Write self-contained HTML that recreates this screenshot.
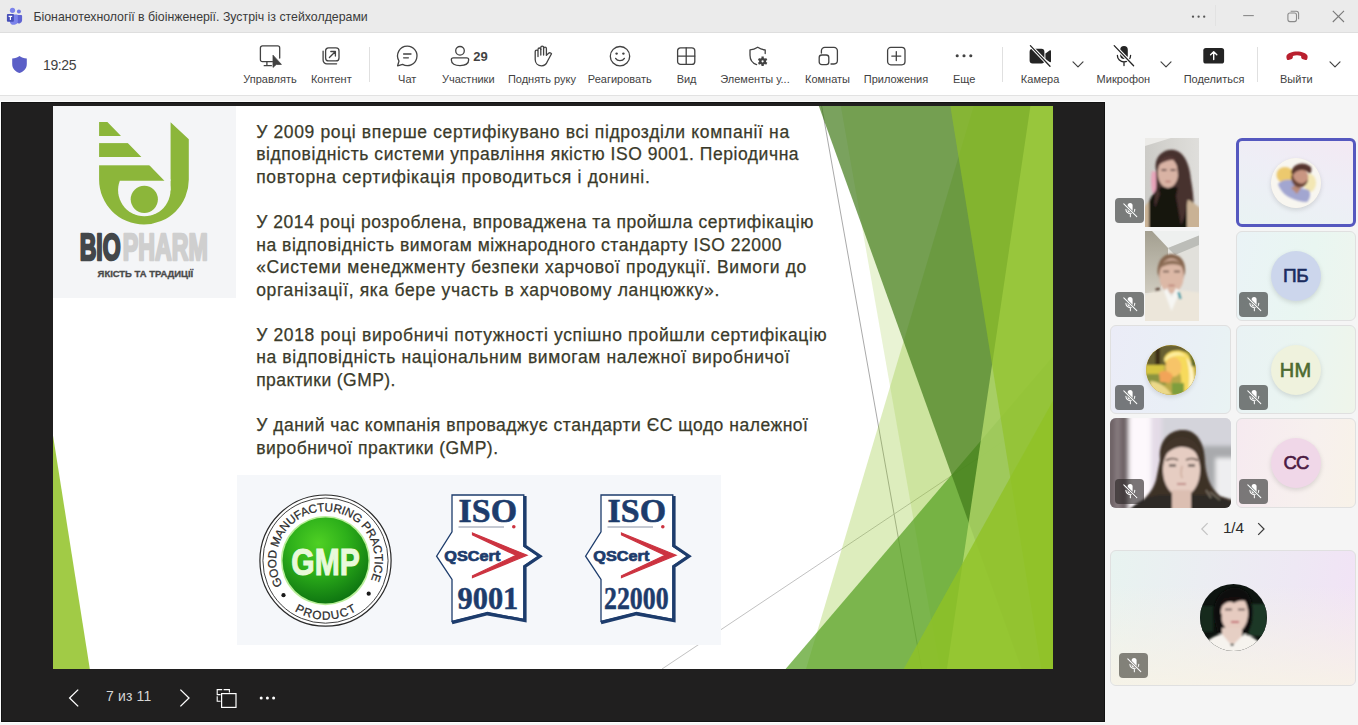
<!DOCTYPE html>
<html lang="uk">
<head>
<meta charset="utf-8">
<title>Teams</title>
<style>
*{box-sizing:border-box;margin:0;padding:0}
html,body{width:1358px;height:725px;overflow:hidden;background:#f5f5f5;font-family:"Liberation Sans",sans-serif;color:#242424}
.abs{position:absolute}
#titlebar{position:absolute;left:0;top:0;width:1358px;height:33px;background:#ebebeb;border-bottom:1px solid #dedede;z-index:2}
#titlebar .ttl{position:absolute;left:33.4px;top:10px;font-size:12.33px;line-height:14px;color:#3a3a3a;white-space:nowrap}
#toolbar{position:absolute;left:0;top:32px;width:1358px;height:64px;background:#fff;border-bottom:1px solid #e2e2e2}
.lbl{position:absolute;top:40px;font-size:11px;line-height:14px;color:#424242;white-space:nowrap;transform:translateX(-50%)}
.vdiv{position:absolute;top:15px;width:1px;height:35px;background:#e0e0e0}
#stage{position:absolute;left:1px;top:102px;width:1104px;height:620px;background:#201f1f;box-shadow:0 0 0 1px #fcfcfc,inset 0 0 0 1px #121212}
#slide{position:absolute;left:52px;top:4px;width:1000px;height:563px;background:#fff;overflow:hidden}
.tl{position:absolute;left:203.2px;font-size:17.5px;line-height:22px;height:22px;color:#3a3a2a;-webkit-text-stroke:0.25px #3a3a2a;white-space:pre}
#panel{position:absolute;left:1105px;top:97px;width:253px;height:628px;background:#f5f5f5}
.tile{position:absolute;width:120px;height:89px;border:1px solid #e0e0e0;border-radius:6px;overflow:hidden}
.badge{position:absolute;width:29px;height:25px;border-radius:4px;background:#858585}
.av{position:absolute;width:50px;height:50px;border-radius:50%;text-align:center;line-height:50px;font-size:19px;font-weight:normal;-webkit-text-stroke:0.6px currentColor;box-shadow:0 2px 5px rgba(0,0,0,.13)}
</style>
</head>
<body>
<div id="titlebar">
  <svg class="abs" style="left:5px;top:7px" width="18" height="18" viewBox="0 0 18 18">
    <circle cx="13.9" cy="4.5" r="2" fill="#7077e0"/>
    <path d="M11.6 8.1 H16.2 A0.9 0.9 0 0 1 17.1 9 V13.2 A3.1 3.1 0 0 1 11.6 15.2 Z" fill="#5f63d2"/>
    <circle cx="7.5" cy="3.3" r="2.6" fill="#7b83eb"/>
    <path d="M4.6 7.5 H11.9 A0.9 0.9 0 0 1 12.8 8.4 V13 A4 4 0 0 1 4.8 14.4 Z" fill="#7b83eb"/>
    <rect x="1.9" y="7" width="7" height="7.7" rx="0.9" fill="#464eb8"/>
    <path d="M3.6 9.3 H7.2 M5.4 9.3 V13" stroke="#fff" stroke-width="1.15" fill="none"/>
  </svg>
  <div class="ttl">Біонанотехнології в біоінженерії. Зустріч із стейхолдерами</div>
  <svg class="abs" style="left:1190px;top:13px" width="18" height="8" viewBox="0 0 18 8"><circle cx="3" cy="3.7" r="1.15" fill="#555"/><circle cx="8.6" cy="3.7" r="1.15" fill="#555"/><circle cx="14.2" cy="3.7" r="1.15" fill="#555"/></svg>
  <div class="abs" style="left:1215px;top:5px;width:1px;height:21px;background:#e2e2e2"></div>
  <svg class="abs" style="left:1242px;top:10px" width="14" height="12" viewBox="0 0 14 12"><path d="M1.2 5.6 H11.8" stroke="#8a8a8a" stroke-width="1.1"/></svg>
  <svg class="abs" style="left:1286px;top:9px" width="15" height="15" viewBox="0 0 15 15"><rect x="1.9" y="4" width="8.6" height="8.6" rx="2" fill="none" stroke="#8a8a8a" stroke-width="1.1"/><path d="M4.6 2.2 H10.2 A2.4 2.4 0 0 1 12.6 4.6 V10.2" fill="none" stroke="#8a8a8a" stroke-width="1.1"/></svg>
  <svg class="abs" style="left:1331px;top:9px" width="15" height="15" viewBox="0 0 15 15"><path d="M1.8 1.9 L13 13 M13 1.9 L1.8 13" stroke="#7a7a7a" stroke-width="1.1"/></svg>
</div>
<div id="toolbar">
<svg style="left:11px;top:23px" class="abs" width="17" height="19" viewBox="0 0 17 19"><path d="M8.5 1 C10.5 2.6 13 3.4 15.8 3.6 V9 C15.8 13.6 12.6 16.6 8.5 18 C4.4 16.6 1.2 13.6 1.2 9 V3.6 C4 3.4 6.5 2.6 8.5 1 Z" fill="#5b5fc7"/></svg>
<div class="abs" style="left:43px;top:24.5px;font-size:14px;line-height:16px;color:#424242;letter-spacing:-0.4px">19:25</div>
<svg style="left:258px;top:12px" class="abs" width="26" height="25" viewBox="0 0 26 25"><path d="M14.4 17.7 H4.4 A2 2 0 0 1 2.4 15.7 V3.9 A2 2 0 0 1 4.4 1.9 H19.7 A2 2 0 0 1 21.7 3.9 V14" fill="none" stroke="#424242" stroke-width="1.3" stroke-linecap="round" stroke-linejoin="round"/><path d="M6.2 21.7 H13.4 M8.9 17.9 V21.5" fill="none" stroke="#424242" stroke-width="1.3" stroke-linecap="round" stroke-linejoin="round"/><path d="M15 11.2 V23.4 L18.3 20.4 H23.4 Z" fill="#424242" stroke="#424242" stroke-width="0.8" stroke-linejoin="round"/></svg>
<div class="lbl" style="left:270px">Управлять</div>
<svg style="left:320px;top:13px" class="abs" width="22" height="22" viewBox="0 0 22 22"><rect x="5.6" y="2.9" width="13.4" height="13" rx="3" fill="none" stroke="#424242" stroke-width="1.3" stroke-linecap="round" stroke-linejoin="round"/><path d="M3.1 6.2 V15 A3.8 3.8 0 0 0 6.9 18.8 H16.6" fill="none" stroke="#424242" stroke-width="1.3" stroke-linecap="round" stroke-linejoin="round"/><path d="M9.4 12.5 L15.2 6.7 M10.8 6.5 H15.4 V11" fill="none" stroke="#424242" stroke-width="1.3" stroke-linecap="round" stroke-linejoin="round"/></svg>
<div class="lbl" style="left:331.3px">Контент</div>
<div class="vdiv" style="left:369px"></div>
<svg style="left:395px;top:12px" class="abs" width="24" height="24" viewBox="0 0 24 24"><path d="M12.3 2.2 A9.7 9.7 0 1 1 7.6 20.4 L2.6 21.8 L4 17 A9.7 9.7 0 0 1 12.3 2.2 Z" fill="none" stroke="#424242" stroke-width="1.3" stroke-linecap="round" stroke-linejoin="round"/><path d="M8.6 10 H16 M8.6 13.8 H13.4" fill="none" stroke="#424242" stroke-width="1.3" stroke-linecap="round" stroke-linejoin="round"/></svg>
<div class="lbl" style="left:407.2px">Чат</div>
<svg style="left:449px;top:12px" class="abs" width="22" height="24" viewBox="0 0 22 24"><circle cx="11" cy="6.8" r="4.3" fill="none" stroke="#424242" stroke-width="1.3" stroke-linecap="round" stroke-linejoin="round"/><path d="M4.3 13.8 H17.7 A2 2 0 0 1 19.7 15.8 C19.7 19.8 16 21.6 11 21.6 C6 21.6 2.3 19.8 2.3 15.8 A2 2 0 0 1 4.3 13.8 Z" fill="none" stroke="#424242" stroke-width="1.3" stroke-linecap="round" stroke-linejoin="round"/></svg>
<div class="abs" style="left:473.2px;top:17.6px;font-size:13px;line-height:14px;font-weight:bold;color:#424242">29</div>
<div class="lbl" style="left:468.3px">Участники</div>
<svg style="left:531px;top:12px" class="abs" width="23" height="24" viewBox="0 0 23 24"><path d="M7 12.5 V5.4 A1.4 1.4 0 0 1 9.8 5.4 V3.6 A1.4 1.4 0 0 1 12.6 3.6 V4.6 A1.4 1.4 0 0 1 15.4 4.6 V11.4 L17.6 9.3 C18.6 8.4 20 8.7 20.5 9.8 L16.6 17 C15.6 19.6 13.8 21.8 10.6 21.8 C7 21.8 4.2 19.4 4.2 15.6 V7.6 A1.4 1.4 0 0 1 7 7.6" fill="none" stroke="#424242" stroke-width="1.3" stroke-linecap="round" stroke-linejoin="round"/><path d="M9.8 5.4 V11 M12.6 4.6 V11" fill="none" stroke="#424242" stroke-width="1.3" stroke-linecap="round" stroke-linejoin="round"/></svg>
<div class="lbl" style="left:541.9px">Поднять руку</div>
<svg style="left:608px;top:12px" class="abs" width="24" height="24" viewBox="0 0 24 24"><circle cx="12" cy="12.2" r="9.7" fill="none" stroke="#424242" stroke-width="1.3" stroke-linecap="round" stroke-linejoin="round"/><circle cx="8.6" cy="9.6" r="1.2" fill="#424242"/><circle cx="15.4" cy="9.6" r="1.2" fill="#424242"/><path d="M7.6 14.4 C9.4 17.4 14.6 17.4 16.4 14.4" fill="none" stroke="#424242" stroke-width="1.3" stroke-linecap="round" stroke-linejoin="round"/></svg>
<div class="lbl" style="left:619.8px">Реагировать</div>
<svg style="left:675px;top:13px" class="abs" width="22" height="22" viewBox="0 0 22 22"><rect x="2.6" y="2.8" width="17.2" height="16.6" rx="3" fill="none" stroke="#424242" stroke-width="1.3" stroke-linecap="round" stroke-linejoin="round"/><path d="M11.2 2.8 V19.4 M2.6 11.1 H19.8" fill="none" stroke="#424242" stroke-width="1.3" stroke-linecap="round" stroke-linejoin="round"/></svg>
<div class="lbl" style="left:686.6px">Вид</div>
<svg style="left:747px;top:12px" class="abs" width="24" height="25" viewBox="0 0 24 25"><path d="M18.2 9.6 V5.9 C15.4 5.7 13 4.7 10.7 3.2 C8.4 4.7 6 5.7 3 5.9 V11.2 C3 16 5.8 19.2 9.6 20.6" fill="none" stroke="#424242" stroke-width="1.3" stroke-linecap="round" stroke-linejoin="round"/><g transform="translate(15.6 17.3)"><circle r="3.4" fill="#424242"/><g stroke="#424242" stroke-width="2.3"><path d="M0 -4.8 V4.8 M-4.15 -2.4 L4.15 2.4 M-4.15 2.4 L4.15 -2.4"/></g><circle r="1.1" fill="#fff"/></g></svg>
<div class="lbl" style="left:755px">Элементы у...</div>
<svg style="left:817px;top:13px" class="abs" width="23" height="22" viewBox="0 0 23 22"><path d="M4.4 8 V5.8 A3.4 3.4 0 0 1 7.8 2.4 H17 A3.4 3.4 0 0 1 20.4 5.8 V15.6 A3.4 3.4 0 0 1 17 19 H14" fill="none" stroke="#424242" stroke-width="1.3" stroke-linecap="round" stroke-linejoin="round"/><rect x="2.2" y="10" width="9.6" height="9.6" rx="2.6" fill="none" stroke="#424242" stroke-width="1.3" stroke-linecap="round" stroke-linejoin="round"/></svg>
<div class="lbl" style="left:827.5px">Комнаты</div>
<svg style="left:885px;top:13px" class="abs" width="23" height="22" viewBox="0 0 23 22"><rect x="2.6" y="2.4" width="17.4" height="17.4" rx="3.2" fill="none" stroke="#424242" stroke-width="1.3" stroke-linecap="round" stroke-linejoin="round"/><path d="M11.3 6.6 V15.6 M6.8 11.1 H15.8" fill="none" stroke="#424242" stroke-width="1.3" stroke-linecap="round" stroke-linejoin="round"/></svg>
<div class="lbl" style="left:896px">Приложения</div>
<svg style="left:954px;top:20px" class="abs" width="20" height="8" viewBox="0 0 20 8"><circle cx="3.2" cy="3.8" r="1.55" fill="#424242"/><circle cx="10" cy="3.8" r="1.55" fill="#424242"/><circle cx="16.8" cy="3.8" r="1.55" fill="#424242"/></svg>
<div class="lbl" style="left:964.1px">Еще</div>
<div class="vdiv" style="left:1002px"></div>
<svg style="left:1028px;top:12px" class="abs" width="25" height="24" viewBox="0 0 25 24"><path d="M4.6 4.8 H13.4 A3 3 0 0 1 16.4 7.8 V16.6 A3 3 0 0 1 13.4 19.6 H4.6 A3 3 0 0 1 1.6 16.6 V7.8 A3 3 0 0 1 4.6 4.8 Z" fill="#242424"/><path d="M17.4 9.4 L21.6 6.4 C22.2 6 23 6.4 23 7.2 V17.2 C23 18 22.2 18.4 21.6 18 L17.4 15 Z" fill="#242424"/><path d="M2.4 1.6 L22 22.2" stroke="#fff" stroke-width="3.4"/><path d="M2.4 1.6 L22 22.2" stroke="#242424" stroke-width="1.3" stroke-linecap="round"/></svg>
<div class="lbl" style="left:1040.1px">Камера</div>
<svg style="left:1071.5px;top:28px" class="abs" width="12" height="9" viewBox="0 0 12 9"><path d="M1 1.8 L6 6.8 L11 1.8" fill="none" stroke="#424242" stroke-width="1.2" stroke-linecap="round" stroke-linejoin="round"/></svg>
<svg style="left:1111px;top:11px" class="abs" width="26" height="26" viewBox="0 0 26 26"><rect x="9.2" y="3" width="7.6" height="13" rx="3.8" fill="#242424"/><path d="M6.4 12.4 A6.6 6.6 0 0 0 19.6 12.4 M13 19.2 V22.6" fill="none" stroke="#242424" stroke-width="1.3" stroke-linecap="round"/><path d="M3.2 2.6 L22.6 22.8" stroke="#fff" stroke-width="3.4"/><path d="M3.2 2.6 L22.6 22.8" stroke="#242424" stroke-width="1.3" stroke-linecap="round"/></svg>
<div class="lbl" style="left:1123.4px">Микрофон</div>
<svg style="left:1159.5px;top:28px" class="abs" width="12" height="9" viewBox="0 0 12 9"><path d="M1 1.8 L6 6.8 L11 1.8" fill="none" stroke="#424242" stroke-width="1.2" stroke-linecap="round" stroke-linejoin="round"/></svg>
<svg style="left:1202px;top:14px" class="abs" width="24" height="19" viewBox="0 0 24 19"><rect x="1.3" y="1.9" width="20.8" height="15.7" rx="2.6" fill="#242424"/><path d="M11.7 13.6 V6 M8.6 8.8 L11.7 5.7 L14.8 8.8" fill="none" stroke="#fff" stroke-width="1.4" stroke-linecap="round" stroke-linejoin="round"/></svg>
<div class="lbl" style="left:1214px">Поделиться</div>
<div class="vdiv" style="left:1257px"></div>
<svg style="left:1285px;top:17px" class="abs" width="24" height="13" viewBox="0 0 24 13"><path d="M12 2.4 C7 2.4 2.6 4 1.6 6.6 C1.2 7.8 1.4 9.4 2 10.4 C2.3 10.9 2.9 11.1 3.5 10.9 L6.8 9.9 C7.4 9.7 7.8 9.2 7.8 8.6 L7.9 6.9 C10.4 6.1 13.6 6.1 16.1 6.9 L16.2 8.6 C16.2 9.2 16.6 9.7 17.2 9.9 L20.5 10.9 C21.1 11.1 21.7 10.9 22 10.4 C22.6 9.4 22.8 7.8 22.4 6.6 C21.4 4 17 2.4 12 2.4 Z" fill="#b91f2e"/></svg>
<div class="lbl" style="left:1296.3px">Выйти</div>
<svg style="left:1328.5px;top:28px" class="abs" width="12" height="9" viewBox="0 0 12 9"><path d="M1 1.8 L6 6.8 L11 1.8" fill="none" stroke="#424242" stroke-width="1.2" stroke-linecap="round" stroke-linejoin="round"/></svg>
</div>
<div id="stage">
<div id="slide">
<svg class="abs" style="left:0;top:0" width="1000" height="563" viewBox="0 0 12192 6858" preserveAspectRatio="none">
<line x1="9371" y1="0" x2="10590" y2="6858" stroke="#a8a8a8" stroke-width="12"/>
<line x1="12189" y1="3681" x2="7425" y2="6858" stroke="#c0c0c0" stroke-width="12"/>
<polygon points="11227,-8 12192,-8 12192,6858 9181,6858" fill="#90c226" fill-opacity="0.30"/>
<polygon points="9603,-8 12192,-8 12192,6858 10812,6858" fill="#90c226" fill-opacity="0.20"/>
<polygon points="12192,3048 12192,6858 8932,6858" fill="#54a021" fill-opacity="0.72"/>
<polygon points="9334,-8 12192,-8 12192,6858 11808,6858" fill="#427a1a" fill-opacity="0.70"/>
<polygon points="11918,-8 12192,-8 12192,6858 10899,6858" fill="#c0e474" fill-opacity="0.70"/>
<polygon points="10939,-8 12192,-8 12192,6858 12048,6858" fill="#90c226" fill-opacity="0.65"/>
<polygon points="12192,3590 12192,6858 10372,6858" fill="#90c226" fill-opacity="0.80"/>
<polygon points="0,4013 449,6858 0,6858" fill="#90c226" fill-opacity="0.85"/>
</svg>
<div class="tl" style="top:14.8px;letter-spacing:0.637px">У 2009 році вперше сертифікувано всі підрозділи компанії на</div>
<div class="tl" style="top:37.4px;letter-spacing:0.560px">відповідність системи управління якістю ISO 9001. Періодична</div>
<div class="tl" style="top:59.9px;letter-spacing:0.710px">повторна сертифікація проводиться і донині.</div>
<div class="tl" style="top:105.0px;letter-spacing:0.558px">У 2014 році розроблена, впроваджена та пройшла сертифікацію</div>
<div class="tl" style="top:127.5px;letter-spacing:0.541px">на відповідність вимогам міжнародного стандарту ISO 22000</div>
<div class="tl" style="top:150.1px;letter-spacing:0.658px">«Системи менеджменту безпеки харчової продукції. Вимоги до</div>
<div class="tl" style="top:172.6px;letter-spacing:0.656px">організації, яка бере участь в харчовому ланцюжку».</div>
<div class="tl" style="top:217.8px;letter-spacing:0.645px">У 2018 році виробничі потужності успішно пройшли сертифікацію</div>
<div class="tl" style="top:240.3px;letter-spacing:0.635px">на відповідність національним вимогам належної виробничої</div>
<div class="tl" style="top:262.8px;letter-spacing:0.422px">практики (GMP).</div>
<div class="tl" style="top:307.9px;letter-spacing:0.516px">У даний час компанія впроваджує стандарти ЄС щодо належної</div>
<div class="tl" style="top:330.5px;letter-spacing:0.479px">виробничої практики (GMP).</div>
<div class="abs" style="left:0;top:0;width:182.5px;height:192px;background:#f4f5f7"></div>
<svg class="abs" style="left:0;top:0" width="183" height="192" viewBox="53 106 183 192">
<path d="M99.1,121.9 L107.4,121.9 L164.4,180.7 L170.6,180.7 L170.6,122.3 L188.8,139.3 L188.8,179.7 A44.85,44.85 0 0 1 99.1,179.7 Z" fill="#8cb63a"/>
<path d="M119.85,180.7 A26.2,26.2 0 1 0 168.75,180.7 Z" fill="#f4f5f7"/>
<rect x="164.4" y="179.5" width="6.2" height="11" fill="#f4f5f7"/>
<rect x="98" y="136" width="66" height="7.1" fill="#f4f5f7"/>
<rect x="98" y="157" width="66" height="8.3" fill="#f4f5f7"/>
<circle cx="144.3" cy="199.3" r="13.6" fill="#8cb63a"/>
<text x="79.7" y="259.9" font-family="Liberation Sans, sans-serif" font-weight="bold" font-size="37.6" fill="#43474a" stroke="#43474a" stroke-width="2.6" stroke-linejoin="round" textLength="40.9" lengthAdjust="spacingAndGlyphs">BIO</text>
<text x="122.7" y="259.9" font-family="Liberation Sans, sans-serif" font-weight="bold" font-size="37.6" fill="#cfcfcf" stroke="#cfcfcf" stroke-width="2.6" stroke-linejoin="round" textLength="85.1" lengthAdjust="spacingAndGlyphs">PHARM</text>
<text x="97.6" y="276.8" font-family="Liberation Sans, sans-serif" font-weight="bold" font-size="8.8" fill="#4a4a4a" stroke="#4a4a4a" stroke-width="0.3" textLength="95.6" lengthAdjust="spacingAndGlyphs">ЯКІСТЬ ТА ТРАДИЦІЇ</text>
</svg>
<div class="abs" style="left:183.5px;top:368.7px;width:484.29999999999995px;height:170.59999999999997px;background:#f5f7fa"></div>
<svg class="abs" style="left:183px;top:368px" width="486" height="172" viewBox="236 474 486 172">
<defs>
<radialGradient id="gb" cx="0.42" cy="0.3" r="0.75"><stop offset="0" stop-color="#4fd024"/><stop offset="0.45" stop-color="#2db01a"/><stop offset="1" stop-color="#0b6f10"/></radialGradient>
<path id="arcTop" d="M282.59,584.88 A49.3,49.3 0 1 1 371.05,579.47"/>
<path id="arcBot" d="M294.67,610.91 A59,59 0 0 0 356.33,610.91"/>
</defs>
<circle cx="325.5" cy="560.6" r="65.6" fill="#fff" stroke="#2a2a2a" stroke-width="1.2"/>
<circle cx="325.5" cy="560.6" r="62.6" fill="none" stroke="#2a2a2a" stroke-width="0.9"/>
<circle cx="325.5" cy="560.6" r="44.6" fill="#b9ef9a"/>
<circle cx="325.5" cy="560.6" r="43" fill="url(#gb)"/>
<text font-family="Liberation Sans, sans-serif" font-size="11.8" fill="#2b2b2b" stroke="#2b2b2b" stroke-width="0.25"><textPath href="#arcTop" textLength="199.6" lengthAdjust="spacing">GOOD MANUFACTURING PRACTICE</textPath></text>
<text font-family="Liberation Sans, sans-serif" font-size="11.8" fill="#2b2b2b" stroke="#2b2b2b" stroke-width="0.25"><textPath href="#arcBot" textLength="64.9" lengthAdjust="spacing">PRODUCT</textPath></text>
<circle cx="283.5" cy="595.2" r="2.1" fill="#1a1a1a"/>
<circle cx="368.7" cy="593.7" r="2.1" fill="#1a1a1a"/>
<text x="291.3" y="575" font-family="Liberation Sans, sans-serif" font-weight="bold" font-size="37" fill="#e9f9da" stroke="#e9f9da" stroke-width="1.1" textLength="68.4" lengthAdjust="spacingAndGlyphs">GMP</text>
<g transform="translate(0 0)">
<path d="M452,495 L523.8,495 L523.8,546.2 L539.2,556.2 L523.8,566.1 L523.8,619.5 L487.5,612.5 L452,621.3 L452,579.4 L436.6,556.2 L452,531.9 Z" fill="#fff" stroke="#1d3c6c" stroke-width="1.3" stroke-linejoin="miter"/>
<path d="M525,496 L525,546 L540,556.2 L525,566.3 L525,620.5 L487.5,613.8 L452,622.6" fill="none" stroke="#1d3c6c" stroke-width="3.2" stroke-linejoin="miter"/>
<text x="458.6" y="522" font-family="Liberation Serif, serif" font-weight="bold" font-size="33.5" fill="#1d3c6c" stroke="#1d3c6c" stroke-width="0.6" textLength="58.4" lengthAdjust="spacingAndGlyphs">ISO</text>
<circle cx="513.8" cy="526.8" r="1.8" fill="#cc3340"/>
<path d="M458.5,527 H504" stroke="#8a93a6" stroke-width="1"/>
<path d="M472.5,533 L527,555.3 L472.5,577.6 L472.5,575.8 L516,555.3 L472.5,534.8 Z" fill="#cc3340" stroke="#cc3340" stroke-width="1.2" stroke-linejoin="miter"/>
<text x="444.3" y="561.3" font-family="Liberation Sans, sans-serif" font-weight="bold" font-size="14.6" fill="#1d3c6c" stroke="#1d3c6c" stroke-width="0.7" textLength="56" lengthAdjust="spacingAndGlyphs">QSCert</text>
<text x="457.5" y="609.2" font-family="Liberation Serif, serif" font-weight="bold" font-size="31.5" fill="#1d3c6c" stroke="#1d3c6c" stroke-width="0.5" textLength="60.8" lengthAdjust="spacingAndGlyphs" >9001</text>
</g>
<g transform="translate(149 0)">
<path d="M452,495 L523.8,495 L523.8,546.2 L539.2,556.2 L523.8,566.1 L523.8,619.5 L487.5,612.5 L452,621.3 L452,579.4 L436.6,556.2 L452,531.9 Z" fill="#fff" stroke="#1d3c6c" stroke-width="1.3" stroke-linejoin="miter"/>
<path d="M525,496 L525,546 L540,556.2 L525,566.3 L525,620.5 L487.5,613.8 L452,622.6" fill="none" stroke="#1d3c6c" stroke-width="3.2" stroke-linejoin="miter"/>
<text x="458.6" y="522" font-family="Liberation Serif, serif" font-weight="bold" font-size="33.5" fill="#1d3c6c" stroke="#1d3c6c" stroke-width="0.6" textLength="58.4" lengthAdjust="spacingAndGlyphs">ISO</text>
<circle cx="513.8" cy="526.8" r="1.8" fill="#cc3340"/>
<path d="M458.5,527 H504" stroke="#8a93a6" stroke-width="1"/>
<path d="M472.5,533 L527,555.3 L472.5,577.6 L472.5,575.8 L516,555.3 L472.5,534.8 Z" fill="#cc3340" stroke="#cc3340" stroke-width="1.2" stroke-linejoin="miter"/>
<text x="444.3" y="561.3" font-family="Liberation Sans, sans-serif" font-weight="bold" font-size="14.6" fill="#1d3c6c" stroke="#1d3c6c" stroke-width="0.7" textLength="56" lengthAdjust="spacingAndGlyphs">QSCert</text>
<text x="457.5" y="609.2" font-family="Liberation Serif, serif" font-weight="bold" font-size="31.5" fill="#1d3c6c" stroke="#1d3c6c" stroke-width="0.5" textLength="64.6" lengthAdjust="spacingAndGlyphs" transform='translate(-2.5 0)'>22000</text>
</g>
</svg>
</div>
<svg class="abs" style="left:66px;top:585px" width="14" height="22" viewBox="0 0 14 22"><path d="M11.2 2.6 L2.6 11 L11.2 19.4" fill="none" stroke="#fff" stroke-width="1.3"/></svg>
<div class="abs" style="left:105px;top:586px;font-size:14px;line-height:16px;color:#d6d6d6;letter-spacing:0.15px;white-space:nowrap">7 из 11</div>
<svg class="abs" style="left:177px;top:585px" width="14" height="22" viewBox="0 0 14 22"><path d="M2.4 2.6 L11 11 L2.4 19.4" fill="none" stroke="#fff" stroke-width="1.3"/></svg>
<svg class="abs" style="left:214px;top:585px" width="24" height="23" viewBox="0 0 24 23"><path d="M7.2 2.6 H2.2 V7.6 H5.6 M8.6 2.6 H14.4 V5.6 M2.2 9.2 V14.2 H5.6" fill="none" stroke="#fff" stroke-width="1.1"/><rect x="6.6" y="6.6" width="14.4" height="13.8" fill="#201f1f" stroke="#fff" stroke-width="1.2"/></svg>
<svg class="abs" style="left:257px;top:591px" width="20" height="10" viewBox="0 0 20 10"><circle cx="3.2" cy="5" r="1.5" fill="#fff"/><circle cx="9.4" cy="5" r="1.5" fill="#fff"/><circle cx="15.6" cy="5" r="1.5" fill="#fff"/></svg>
</div>
<div id="panel">
<div class="abs" id="ph1" style="left:40px;top:41px;width:54px;height:89px;background:#cfcac4;overflow:hidden"><svg width="54" height="89" viewBox="0 0 54 89" style="position:absolute;left:0;top:0">
<defs><filter id="b1" x="-20%" y="-20%" width="140%" height="140%"><feGaussianBlur stdDeviation="0.9"/></filter>
<linearGradient id="w1" x1="0" x2="1"><stop offset="0" stop-color="#cccbc7"/><stop offset="0.6" stop-color="#d8d7d3"/><stop offset="1" stop-color="#dfdedb"/></linearGradient></defs>
<rect width="54" height="89" fill="url(#w1)"/>
<path d="M0 0 H26 L0 8 Z" fill="#ecebe8"/>
<g filter="url(#b1)">
<path d="M11 32 C8 18 20 10 29 12 C40 14 45 28 46 42 C49 58 50 74 47 96 H8 C6 78 8 62 10 50 Z" fill="#47302d"/>
<path d="M7 33 C5.5 42 6 50 8 56 L11.5 52 L11 34 Z" fill="#e8a4ba"/>
<path d="M-4 96 V72 C2 66 5 62 8 60 L44 62 C48 64 52 68 58 72 V96 Z" fill="#c9b295"/>
<path d="M4 96 V64 C7 56 12 51 17 49 L31 49 C38 52 42 60 42 70 V96 Z" fill="#151211"/>
<ellipse cx="23" cy="35" rx="10.2" ry="15" fill="#d9b3a4"/>
<path d="M13 28 C15 17 28 15 34 23 C29 21 19 22 13 28 Z" fill="#553834"/>
<path d="M16.5 32 h5 M25.5 32 h5" stroke="#4a3430" stroke-width="1.3"/>
<path d="M20.5 43.5 h5" stroke="#b4706c" stroke-width="1.4"/>
<path d="M30 18 C40 24 44 40 43 58 C42 70 40 80 36 87 L31 58 C34 48 34 34 30 18 Z" fill="#47302d"/>
<path d="M12 46 C10 54 9 62 10 70 L15 56 Z" fill="#47302d"/>
</g></svg></div>
<div class="badge" style="left:10px;top:101px;background:rgba(42,46,44,0.61);width:29px;height:25px"><svg width="29" height="25" viewBox="0 0 29 25" style="position:absolute;left:0;top:0"><rect x="12.6" y="5" width="5" height="9.4" rx="2.5" fill="#fff"/><path d="M10.9 11.3 A4.45 4.45 0 0 0 19.8 11.3 M15.35 15.9 V18.8" fill="none" stroke="#fff" stroke-width="1.05" stroke-linecap="round"/><path d="M9.6 6.7 L21.2 18.1" stroke="#767b7a" stroke-width="2.6"/><path d="M8.8 5.9 L21.8 18.7" stroke="#fff" stroke-width="1.05" stroke-linecap="round"/></svg></div>
<div class="tile" style="left:130.5px;top:41px;width:120.5px;height:88.5px;background:linear-gradient(200deg,#f3e9f3 0%,#eeeef6 45%,#e9f3f3 100%);border:3px solid #5558bf"></div>
<div class="av" id="av1" style="left:166px;top:60.5px;background:#f4efe6"><svg width="50" height="50" viewBox="0 0 50 50" style="position:absolute;left:0;top:0;border-radius:50%">
<defs><filter id="b3" x="-20%" y="-20%" width="140%" height="140%"><feGaussianBlur stdDeviation="1.2"/></filter><clipPath id="c3"><circle cx="25" cy="25" r="25"/></clipPath></defs>
<g clip-path="url(#c3)"><rect width="50" height="50" fill="#f8f6f0"/>
<g filter="url(#b3)">
<ellipse cx="14" cy="17" rx="8.5" ry="8" fill="#ecc96e"/>
<ellipse cx="39" cy="25" rx="6" ry="9" fill="#f3e7b4"/>
<path d="M7 26 C10 22 16 21 20 22 L30 30 L38 32 C40 36 39 41 36 44 C30 44 24 42 20 40 C14 38 9 32 7 26 Z" fill="#a2a6d0"/>
<path d="M20 30 L26 36 L30 30 L26 26 Z" fill="#b98a78"/>
<ellipse cx="29" cy="19.5" rx="8.3" ry="10" fill="#c99682"/>
<path d="M20 15 C21 6 32 2 40 9 C41 12 40 15 39 16 C34 10 26 11 22 17 Z" fill="#57362e"/>
<path d="M20 18 C20 26 25 31 31 29 C35 28 37 24 37 21 C34 26 29 27 25 23 C23 21 22 19 22 16 Z" fill="#6a4438"/>
</g></g></svg></div>
<div class="abs" id="ph2" style="left:40px;top:134px;width:54px;height:90px;background:#d8d4cc;overflow:hidden"><svg width="54" height="90" viewBox="0 0 54 90" style="position:absolute;left:0;top:0">
<defs><filter id="b2" x="-20%" y="-20%" width="140%" height="140%"><feGaussianBlur stdDeviation="0.9"/></filter>
<linearGradient id="w2" x1="0" y1="0" x2="0" y2="1"><stop offset="0" stop-color="#a39f90"/><stop offset="1" stop-color="#cfcbbf"/></linearGradient></defs>
<rect width="54" height="90" fill="#e1e0db"/>
<path d="M7 0 H54 V5 L23 17 Z" fill="#eef0ef"/>
<path d="M23 17 L54 4.5 V14 L30 24 Z" fill="#bcbdb8"/>
<path d="M0 0 H7 L23 17 L23 40 L13 62 H0 Z" fill="url(#w2)"/>
<g filter="url(#b2)">
<path d="M12.5 42 C12 28 20 22.5 27 23 C37 24 41 32 40 42 L38 48 L15 48 Z" fill="#86664f"/>
<ellipse cx="26.5" cy="45" rx="12.2" ry="17.4" fill="#dcb8a6"/>
<path d="M14 38 C17 27 35 26 39 37 C33 31.5 21 32 14 38 Z" fill="#8f6f58"/>
<ellipse cx="13" cy="59.5" rx="2.6" ry="2.8" fill="#5a4030"/>
<path d="M-5 98 V66 C5 61 12 60 18 59 L26 74 L34 59 C42 60 50 61 60 62 V98 Z" fill="#ece6da"/>
<path d="M19 60 L26.5 80 L35 60 L31 57 L26.5 66 L22 57 Z" fill="#f6f6f3"/>
<path d="M18 40.5 h6 M29 40.5 h6" stroke="#5e463c" stroke-width="1.5"/>
<path d="M23.5 54.5 h6" stroke="#b57870" stroke-width="1.4"/>
<path d="M33.5 61 l2 7" stroke="#2a9aa6" stroke-width="2.6"/>
</g></svg></div>
<div class="badge" style="left:10px;top:195px;background:rgba(42,46,44,0.61);width:29px;height:25px"><svg width="29" height="25" viewBox="0 0 29 25" style="position:absolute;left:0;top:0"><rect x="12.6" y="5" width="5" height="9.4" rx="2.5" fill="#fff"/><path d="M10.9 11.3 A4.45 4.45 0 0 0 19.8 11.3 M15.35 15.9 V18.8" fill="none" stroke="#fff" stroke-width="1.05" stroke-linecap="round"/><path d="M9.6 6.7 L21.2 18.1" stroke="#767b7a" stroke-width="2.6"/><path d="M8.8 5.9 L21.8 18.7" stroke="#fff" stroke-width="1.05" stroke-linecap="round"/></svg></div>
<div class="tile" style="left:130.5px;top:134px;width:120px;height:89.5px;background:linear-gradient(100deg,#eaf3f6 0%,#e9f6f1 60%,#eef5ee 100%);border:1px solid #e0e0e0"></div>
<div class="av" style="left:165.70000000000005px;top:153.8px;background:#ccd6ec;color:#1b2c5e;font-size:19px;letter-spacing:-0.4px">ПБ</div>
<div class="badge" style="left:134px;top:195px;background:rgba(42,46,44,0.61);width:29px;height:25px"><svg width="29" height="25" viewBox="0 0 29 25" style="position:absolute;left:0;top:0"><rect x="12.6" y="5" width="5" height="9.4" rx="2.5" fill="#fff"/><path d="M10.9 11.3 A4.45 4.45 0 0 0 19.8 11.3 M15.35 15.9 V18.8" fill="none" stroke="#fff" stroke-width="1.05" stroke-linecap="round"/><path d="M9.6 6.7 L21.2 18.1" stroke="#767b7a" stroke-width="2.6"/><path d="M8.8 5.9 L21.8 18.7" stroke="#fff" stroke-width="1.05" stroke-linecap="round"/></svg></div>
<div class="tile" style="left:5px;top:228px;width:121px;height:88.5px;background:linear-gradient(100deg,#ebecf7 0%,#e9eff6 55%,#e9f3f3 100%);border:1px solid #e0e0e0"></div>
<div class="av" id="av3" style="left:40.799999999999955px;top:247.8px;background:#d9b95a"><svg width="50" height="50" viewBox="0 0 50 50" style="position:absolute;left:0;top:0;border-radius:50%">
<defs><filter id="b4" x="-20%" y="-20%" width="140%" height="140%"><feGaussianBlur stdDeviation="1.2"/></filter><clipPath id="c4"><circle cx="25" cy="25" r="25"/></clipPath></defs>
<g clip-path="url(#c4)"><rect width="50" height="50" fill="#b9a848"/>
<g filter="url(#b4)">
<path d="M0 0 H50 V20 H0 Z" fill="#676030"/>
<path d="M9.5 2 h4.5 v23 h-4.5 Z" fill="#3a2a14"/>
<path d="M0 20 H18 V30 H0 Z" fill="#d6c540"/>
<path d="M0 29 H20 V40 H0 Z" fill="#8a9440"/>
<path d="M40 6 h10 v16 h-8 Z" fill="#8a8a3a"/>
<path d="M18 14 C20 4 38 2 44 12 C50 22 50 38 46 50 L34 50 C36 40 36 30 32 24 L22 24 Z" fill="#f7da5c"/>
<path d="M40 12 C48 20 50 36 47 48 L42 46 C44 36 44 22 40 12 Z" fill="#fff4c4"/>
<path d="M41.5 7 C46 10 49.5 16 50 22 L45.5 21 C45 16 44 11 41.5 7 Z" fill="#5f6a2c"/>
<ellipse cx="27.5" cy="22" rx="8" ry="10" fill="#f7c468"/>
<path d="M18 17 C20 6 35 4 40 12 C33 9 24 11 18 17 Z" fill="#fdeea0"/>
<path d="M13 28 C17 24 24 26 27 31 L24 38 L14 37 Z" fill="#f2a458"/>
<path d="M26 38 h12 v12 h-12 Z" fill="#7f9e3e"/>
<path d="M4 36 C10 36 20 40 26 50 H6 Z" fill="#ecd98a"/>
</g></g></svg></div>
<div class="badge" style="left:10px;top:288px;background:rgba(42,46,44,0.61);width:29px;height:25px"><svg width="29" height="25" viewBox="0 0 29 25" style="position:absolute;left:0;top:0"><rect x="12.6" y="5" width="5" height="9.4" rx="2.5" fill="#fff"/><path d="M10.9 11.3 A4.45 4.45 0 0 0 19.8 11.3 M15.35 15.9 V18.8" fill="none" stroke="#fff" stroke-width="1.05" stroke-linecap="round"/><path d="M9.6 6.7 L21.2 18.1" stroke="#767b7a" stroke-width="2.6"/><path d="M8.8 5.9 L21.8 18.7" stroke="#fff" stroke-width="1.05" stroke-linecap="round"/></svg></div>
<div class="tile" style="left:130.5px;top:228px;width:120px;height:88.5px;background:linear-gradient(100deg,#e9f2f4 0%,#eaf5f1 55%,#eff5ea 100%);border:1px solid #e0e0e0"></div>
<div class="av" style="left:165.70000000000005px;top:247.8px;background:#eff2dd;color:#4c6a30;font-size:20px;letter-spacing:0.4px">НМ</div>
<div class="badge" style="left:134px;top:288px;background:rgba(42,46,44,0.61);width:29px;height:25px"><svg width="29" height="25" viewBox="0 0 29 25" style="position:absolute;left:0;top:0"><rect x="12.6" y="5" width="5" height="9.4" rx="2.5" fill="#fff"/><path d="M10.9 11.3 A4.45 4.45 0 0 0 19.8 11.3 M15.35 15.9 V18.8" fill="none" stroke="#fff" stroke-width="1.05" stroke-linecap="round"/><path d="M9.6 6.7 L21.2 18.1" stroke="#767b7a" stroke-width="2.6"/><path d="M8.8 5.9 L21.8 18.7" stroke="#fff" stroke-width="1.05" stroke-linecap="round"/></svg></div>
<div class="abs" id="vid4" style="left:5px;top:321px;width:121px;height:89.5px;border-radius:6px;background:#d9d6dc;overflow:hidden"><svg width="121" height="90" viewBox="0 0 121 90" style="position:absolute;left:0;top:0">
<defs><filter id="b5" x="-20%" y="-20%" width="140%" height="140%"><feGaussianBlur stdDeviation="1.1"/></filter>
<filter id="b5b" x="-20%" y="-20%" width="140%" height="140%"><feGaussianBlur stdDeviation="2"/></filter></defs>
<rect width="121" height="90" fill="#d4d4db"/>
<g filter="url(#b5b)">
<rect x="90" y="28" width="36" height="66" fill="#a9aaad"/>
<rect x="105.5" y="40" width="20" height="42" fill="#eeeef0"/>
<rect x="38" y="-4" width="14" height="98" fill="#e4dbe7"/>
<rect x="18" y="-4" width="23" height="98" fill="#fdf8fc"/>
<rect x="-4" y="-4" width="22.5" height="98" fill="#6e6366"/>
<rect x="5" y="-4" width="5" height="98" fill="#887d80"/>
</g>
<g filter="url(#b5)">
<path d="M50 42 C48 22 60 11 74 12 C90 13 95 30 95 44 C96 58 100 70 110 78 L128 84 V98 H14 C32 84 42 76 46 62 Z" fill="#3d3028"/>
<path d="M12 98 C28 82 40 78 50 77 L100 77 C110 79 118 83 128 87 V98 Z" fill="#2d2b25"/>
<ellipse cx="71.5" cy="52" rx="18.6" ry="27" fill="#e6cdc2"/>
<path d="M52 42 C52 24 66 16 78 20 C88 24 92 34 92 44 C88 34 80 28 70 29 C62 30 56 35 52 42 Z" fill="#43352b"/>
<rect x="62" y="72" width="19" height="26" fill="#dcbfb2"/>
<path d="M14 98 L50 80 L62 84 L62 98 Z" fill="#2d2b25"/>
<path d="M81 84 L96 78 L128 90 V98 H81 Z" fill="#2d2b25"/>
<path d="M56 42.5 C60 40 64 40 68 42 M76 42 C80 40 84 40 88 42.5" stroke="#4f3f38" stroke-width="1.5" fill="none"/>
<path d="M59 47.5 h7 M78 47.5 h7" stroke="#4a403c" stroke-width="2"/>
<path d="M67 66 h9" stroke="#c08c88" stroke-width="2"/>
<path d="M72 48 C70.5 55 70.5 58 72.5 60" stroke="#cfae9f" stroke-width="1.6" fill="none"/>
<path d="M100 74 l10 8 M96 72 l5 8" stroke="#7a7264" stroke-width="1.6"/>
</g></svg></div>
<div class="badge" style="left:10px;top:382px;background:rgba(40,36,36,.62);width:29px;height:25px"><svg width="29" height="25" viewBox="0 0 29 25" style="position:absolute;left:0;top:0"><rect x="12.6" y="5" width="5" height="9.4" rx="2.5" fill="#fff"/><path d="M10.9 11.3 A4.45 4.45 0 0 0 19.8 11.3 M15.35 15.9 V18.8" fill="none" stroke="#fff" stroke-width="1.05" stroke-linecap="round"/><path d="M9.6 6.7 L21.2 18.1" stroke="#5a5456" stroke-width="2.6"/><path d="M8.8 5.9 L21.8 18.7" stroke="#fff" stroke-width="1.05" stroke-linecap="round"/></svg></div>
<div class="tile" style="left:130.5px;top:321px;width:120px;height:89.5px;background:linear-gradient(100deg,#f6eaf0 0%,#f7f0ee 60%,#f8f2e8 100%);border:1px solid #e0e0e0"></div>
<div class="av" style="left:166.0px;top:341.0px;background:#f0d7e8;color:#4b1a42;font-size:18.5px;letter-spacing:-0.9px">СС</div>
<div class="badge" style="left:134px;top:382px;background:rgba(42,46,44,0.61);width:29px;height:25px"><svg width="29" height="25" viewBox="0 0 29 25" style="position:absolute;left:0;top:0"><rect x="12.6" y="5" width="5" height="9.4" rx="2.5" fill="#fff"/><path d="M10.9 11.3 A4.45 4.45 0 0 0 19.8 11.3 M15.35 15.9 V18.8" fill="none" stroke="#fff" stroke-width="1.05" stroke-linecap="round"/><path d="M9.6 6.7 L21.2 18.1" stroke="#767b7a" stroke-width="2.6"/><path d="M8.8 5.9 L21.8 18.7" stroke="#fff" stroke-width="1.05" stroke-linecap="round"/></svg></div>
<svg class="abs" style="left:94px;top:424px" width="12" height="16" viewBox="0 0 12 16"><path d="M8.6 2.2 L2.8 8 L8.6 13.8" fill="none" stroke="#c4c4c4" stroke-width="1.2"/></svg>
<div class="abs" style="left:118px;top:421.70000000000005px;font-size:15.4px;line-height:18px;color:#2c2c2c;letter-spacing:-0.2px">1/4</div>
<svg class="abs" style="left:150.0999999999999px;top:423.5px" width="12" height="16" viewBox="0 0 12 16"><path d="M3.2 2.2 L9 8 L3.2 13.8" fill="none" stroke="#3a3a3a" stroke-width="1.2"/></svg>
<div class="tile" style="left:5px;top:453px;width:245.5px;height:135.5px;background:linear-gradient(100deg,rgba(232,243,240,1) 0%,rgba(238,232,244,1) 70%,rgba(242,226,246,1) 100%);border:1px solid #e0e0e0"></div>
<div class="abs" style="left:6px;top:454px;width:243.5px;height:133.5px;border-radius:5px;background:linear-gradient(180deg,rgba(248,244,228,0) 0%,rgba(248,244,228,0) 25%,rgba(248,243,230,.85) 100%)"></div>
<div class="av" id="av5" style="left:94.5px;top:487.0px;width:67px;height:67px;background:transparent;box-shadow:none"><svg width="67" height="67" viewBox="0 0 67 67" style="position:absolute;left:0;top:0">
<defs><filter id="b6" x="-20%" y="-20%" width="140%" height="140%"><feGaussianBlur stdDeviation="1.2"/></filter><clipPath id="c6"><circle cx="33.5" cy="33.5" r="33.5"/></clipPath></defs>
<g clip-path="url(#c6)"><rect width="67" height="67" fill="#0d1410"/>
<g filter="url(#b6)">
<path d="M47 20 h20 v32 h-18 Z" fill="#1b3827"/>
<path d="M0 22 h13 v26 h-13 Z" fill="#15291d"/>
<path d="M14 34 C12 12 26 2 38 4 C52 6 54 22 52 38 L48 50 L18 50 Z" fill="#0c0b0b"/>
<ellipse cx="34.5" cy="29.5" rx="13.6" ry="19.5" fill="#e6cbc0"/>
<path d="M18 28 C18 8 42 2 51 20 C45 15 39 16 34 19 C28 15 22 21 18 28 Z" fill="#121010"/>
<path d="M20 16 C24 6 44 6 49 16 C42 11 28 11 20 16 Z" fill="#0c0b0b"/>
<path d="M14 28 C15 36 17 42 20 46 L22 30 Z" fill="#0c0b0b"/>
<rect x="22" y="44" width="20" height="16" fill="#e6cfc4"/>
<path d="M-6 78 C2 56 14 52 22 50 L32 62 L44 50 C52 52 62 56 72 78 Z" fill="#f6f3ee"/>
<path d="M25 25.5 h7 M38 25.5 h7" stroke="#4a3a38" stroke-width="1.6"/>
<path d="M31 38 h8" stroke="#c0606a" stroke-width="1.8"/>
</g></g></svg></div>
<div class="badge" style="left:14px;top:556px;background:rgba(48,46,40,0.58);width:29px;height:25px"><svg width="29" height="25" viewBox="0 0 29 25" style="position:absolute;left:0;top:0"><rect x="12.6" y="5" width="5" height="9.4" rx="2.5" fill="#fff"/><path d="M10.9 11.3 A4.45 4.45 0 0 0 19.8 11.3 M15.35 15.9 V18.8" fill="none" stroke="#fff" stroke-width="1.05" stroke-linecap="round"/><path d="M9.6 6.7 L21.2 18.1" stroke="#827f7a" stroke-width="2.6"/><path d="M8.8 5.9 L21.8 18.7" stroke="#fff" stroke-width="1.05" stroke-linecap="round"/></svg></div>
</div>
</body>
</html>
